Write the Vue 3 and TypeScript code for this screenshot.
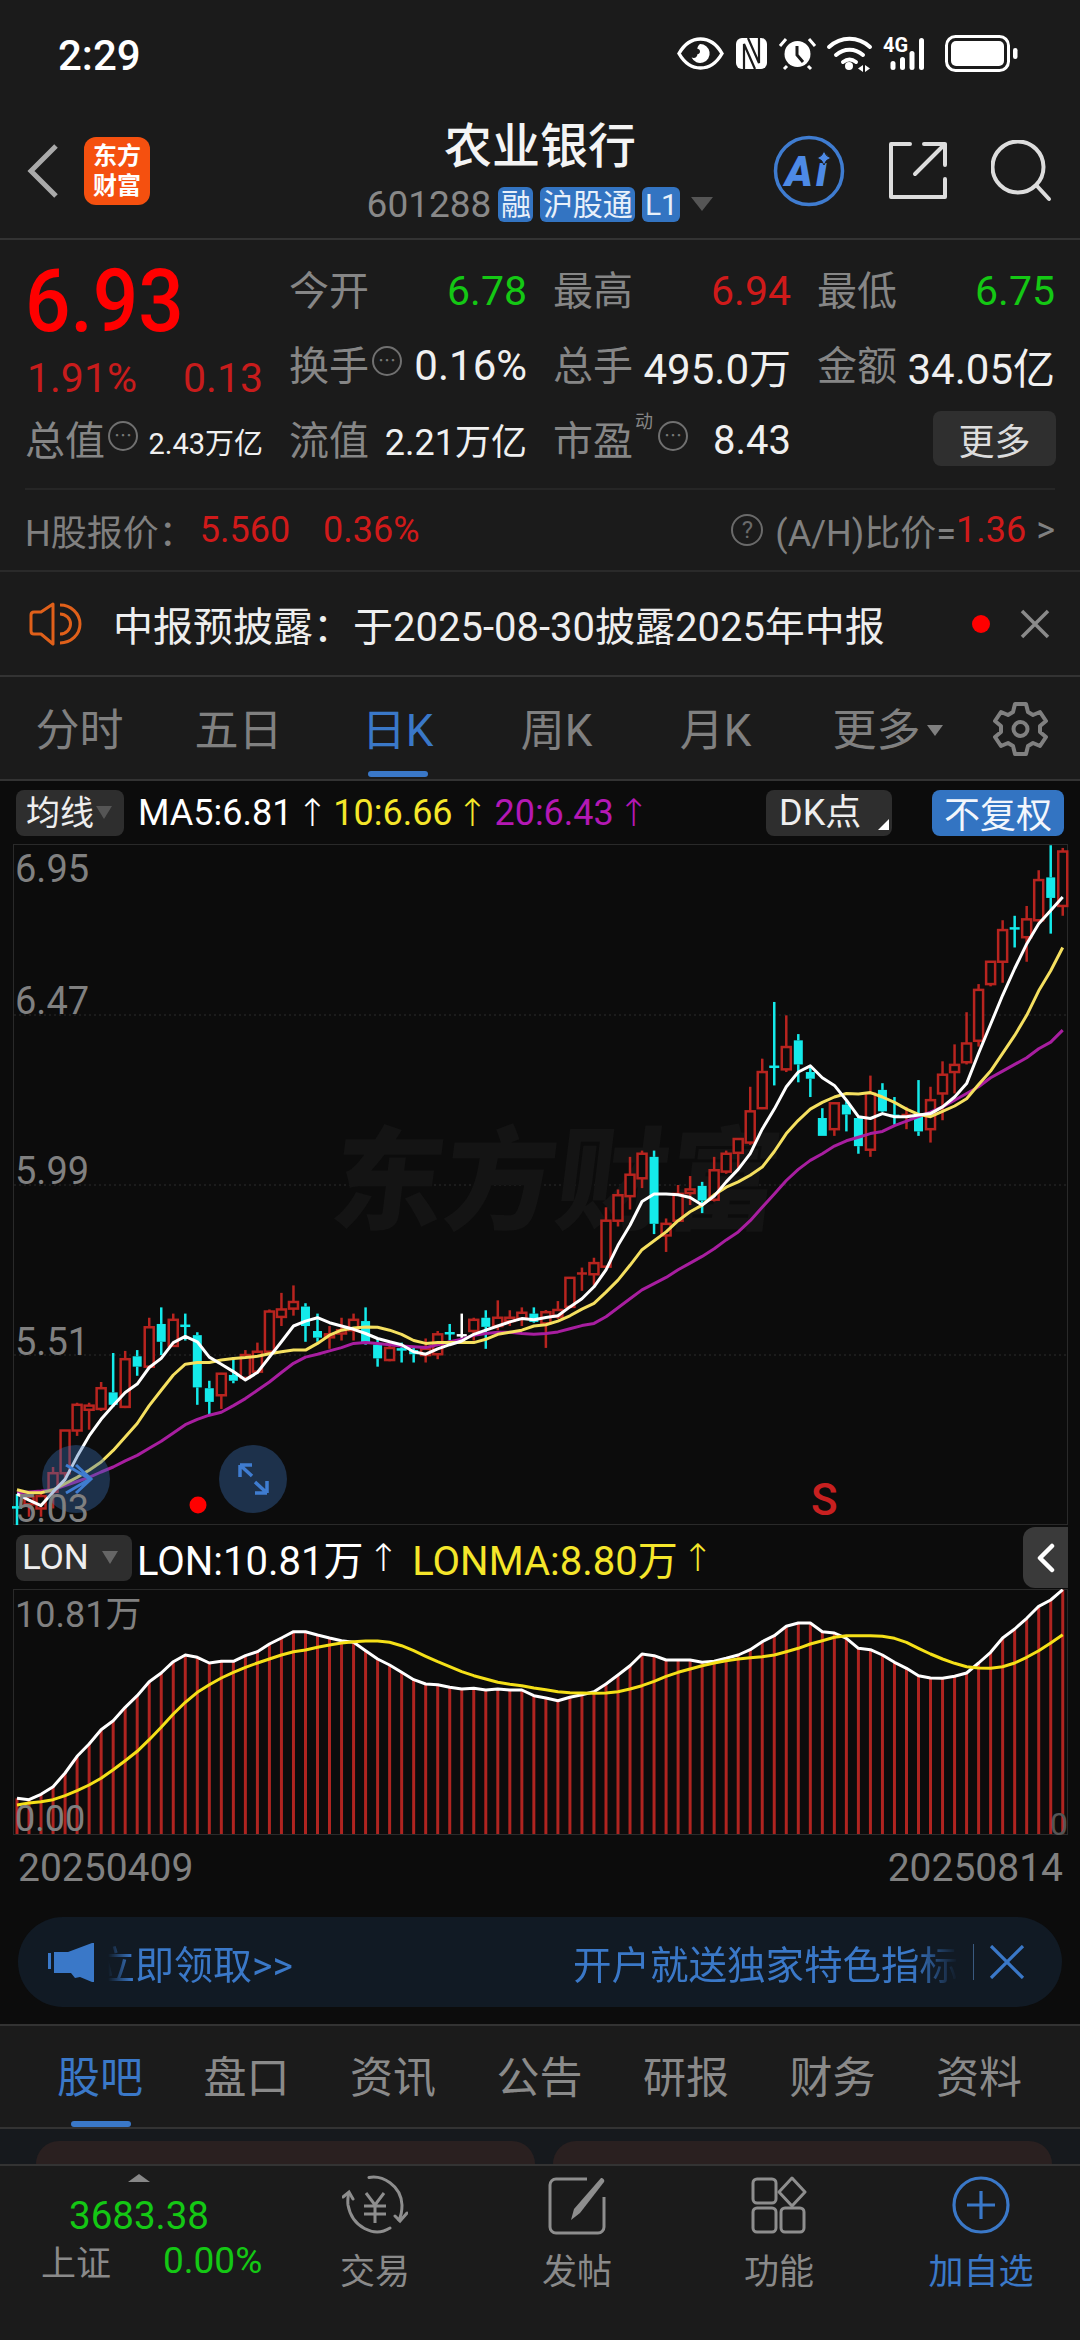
<script setup lang="ts">
import { computed } from 'vue'

// One candle: index on the axis, filled (falling) flag, wick top, body top, body bottom, wick bottom.
// The y values are sampled from the price chart in two strips with different scales.
type Raw = [number, number, number, number, number]

const kx = (i: number) => 17 + 12.02 * i
const leftY = (y: number) => 900 + y / 2.412
const rightY = (y: number) => 840 + y / 2.24

const leftCandles: Raw[] = [
  [2, 1435, 1465, 1467, 1510], [0, 1440, 1442, 1460, 1490], [0, 1430, 1440, 1470, 1490],
  [0, 1370, 1385, 1430, 1470], [0, 1282, 1282, 1385, 1400], [0, 1215, 1220, 1282, 1295],
  [0, 1215, 1222, 1232, 1280], [0, 1165, 1180, 1230, 1235], [1, 1095, 1190, 1220, 1225],
  [0, 1090, 1110, 1225, 1228], [1, 1088, 1103, 1128, 1150], [0, 1010, 1033, 1128, 1130],
  [1, 985, 1025, 1068, 1100], [0, 1000, 1015, 1078, 1080], [2, 1000, 1027, 1030, 1065],
  [1, 1045, 1052, 1178, 1220], [1, 1162, 1180, 1213, 1245], [0, 1143, 1145, 1197, 1230],
  [1, 1105, 1148, 1162, 1168], [0, 1088, 1100, 1155, 1155], [0, 1070, 1092, 1140, 1145],
  [0, 990, 995, 1092, 1095], [0, 950, 990, 1008, 1030], [0, 932, 972, 988, 1005],
  [1, 975, 983, 1030, 1068], [1, 1000, 1042, 1058, 1068], [0, 1030, 1050, 1055, 1085],
  [0, 1010, 1040, 1048, 1065], [0, 1000, 1015, 1040, 1065], [1, 985, 1018, 1072, 1075],
  [1, 1060, 1075, 1108, 1128], [0, 1065, 1083, 1112, 1115], [2, 1070, 1084, 1087, 1118],
  [1, 1080, 1088, 1098, 1118], [0, 1060, 1085, 1100, 1118], [0, 1042, 1050, 1098, 1110],
  [2, 1025, 1045, 1048, 1065], [3, 1000, 1050, 1053, 1060], [0, 1010, 1015, 1042, 1065],
  [1, 992, 1010, 1032, 1085], [0, 968, 1010, 1030, 1040], [0, 992, 1010, 1018, 1030],
  [0, 985, 998, 1012, 1030], [1, 985, 1000, 1020, 1022],
]
const rightCandles: Raw[] = [
  [0, 1055, 1060, 1085, 1140], [0, 1035, 1055, 1070, 1075], [0, 983, 983, 1048, 1048],
  [4, 960, 971, 974, 1012], [0, 938, 950, 975, 1000], [0, 825, 855, 958, 960],
  [0, 785, 798, 855, 868], [0, 712, 752, 800, 830], [0, 698, 705, 760, 782],
  [1, 698, 712, 862, 885], [0, 850, 862, 888, 925], [0, 775, 795, 855, 858],
  [0, 755, 785, 793, 820], [1, 768, 777, 810, 838], [0, 712, 742, 808, 812],
  [0, 698, 705, 745, 750], [0, 672, 672, 703, 740], [0, 555, 610, 680, 685],
  [0, 492, 522, 603, 605], [2, 365, 508, 512, 552], [0, 395, 466, 516, 522],
  [1, 437, 451, 505, 545], [1, 510, 522, 537, 578], [1, 603, 625, 665, 665],
  [0, 590, 592, 650, 665], [1, 585, 595, 617, 655], [1, 620, 625, 688, 705],
  [0, 530, 570, 696, 712], [1, 547, 562, 610, 612], [2, 578, 618, 622, 640],
  [4, 600, 616, 620, 650], [1, 540, 615, 655, 665], [0, 555, 585, 650, 680],
  [0, 498, 528, 570, 630], [0, 460, 506, 522, 570], [0, 388, 458, 500, 505],
  [0, 325, 338, 452, 465], [0, 275, 275, 325, 330], [0, 182, 204, 275, 322],
  [2, 172, 198, 202, 243], [0, 150, 180, 220, 275], [0, 70, 92, 182, 185],
  [1, 14, 86, 132, 212], [0, 20, 28, 150, 172],
]

// 0 = hollow red, 1 = filled cyan, 2 = thin cyan, 3 = thin white, 4 = thin red
const candles = computed(() => {
  const rows = [
    ...leftCandles.map((r) => r.map((v, n) => (n === 0 ? v : leftY(v)))),
    ...rightCandles.map((r) => r.map((v, n) => (n === 0 ? v : rightY(v)))),
  ]
  return rows.map((r, i) => {
    const kind = r[0]
    const cls = kind === 0 || kind === 4 ? 'red' : kind === 3 ? 'white' : 'cyan'
    return { x: kx(i), kind, cls, wt: r[1], bt: r[2], bb: r[3], wb: r[4] }
  })
})

function maLine(left: number[], right: number[]) {
  const ys = [...left.map(leftY), ...right.map(rightY)]
  return ys.map((y, i) => `${kx(i).toFixed(1)},${y.toFixed(1)}`).join(' ')
}

const ma5 = maLine(
  [1435, 1450, 1463, 1430, 1400, 1345, 1295, 1255, 1222, 1190, 1170, 1130, 1108, 1070, 1055, 1068, 1105, 1122, 1140, 1160, 1142, 1105, 1068, 1030, 1018, 1010, 1022, 1030, 1038, 1048, 1060, 1068, 1075, 1092, 1098, 1085, 1075, 1066, 1050, 1040, 1030, 1020, 1012, 1015],
  [1072, 1068, 1048, 1030, 1003, 965, 910, 865, 812, 795, 795, 797, 803, 820, 800, 768, 740, 705, 650, 605, 555, 522, 508, 535, 552, 585, 622, 626, 615, 622, 622, 618, 615, 600, 578, 548, 480, 415, 350, 290, 235, 190, 160, 130],
)
const ma10 = maLine(
  [1425, 1432, 1432, 1425, 1410, 1395, 1378, 1358, 1330, 1298, 1265, 1222, 1185, 1148, 1122, 1118, 1118, 1112, 1108, 1106, 1103, 1097, 1092, 1088, 1088, 1072, 1052, 1040, 1035, 1032, 1033, 1040, 1050, 1065, 1072, 1070, 1070, 1070, 1070, 1062, 1050, 1045, 1040, 1030],
  [1088, 1080, 1068, 1053, 1040, 1015, 988, 955, 920, 900, 880, 855, 835, 820, 797, 780, 768, 753, 735, 700, 660, 630, 605, 590, 578, 570, 571, 568, 578, 590, 605, 617, 622, 610, 598, 582, 550, 520, 480, 440, 395, 340, 295, 243],
)
const ma20 = maLine(
  [1432, 1430, 1428, 1425, 1415, 1405, 1395, 1382, 1370, 1355, 1342, 1325, 1308, 1288, 1268, 1255, 1245, 1238, 1222, 1205, 1185, 1165, 1142, 1120, 1105, 1098, 1090, 1082, 1072, 1070, 1072, 1075, 1078, 1080, 1082, 1075, 1068, 1062, 1052, 1048, 1045, 1045, 1048, 1050],
  [1108, 1104, 1097, 1090, 1085, 1070, 1050, 1030, 1010, 996, 982, 965, 950, 935, 918, 898, 880, 855, 825, 795, 765, 740, 720, 705, 688, 676, 668, 660, 655, 642, 632, 622, 612, 600, 585, 570, 555, 535, 520, 505, 490, 470, 455, 428],
)

// LON panel, sampled 3x from the reference. Base of the bars is y = 1835.
const lonRaw = [838, 842, 826, 803, 762, 712, 675, 632, 605, 565, 530, 488, 462, 428, 408, 415, 432, 427, 427, 410, 398, 375, 357, 338, 338, 348, 357, 365, 370, 395, 420, 438, 460, 482, 495, 497, 505, 510, 508, 513, 510, 513, 513, 530, 537, 545, 535, 527, 518, 495, 468, 440, 405, 410, 423, 423, 423, 430, 427, 418, 408, 392, 368, 350, 322, 312, 312, 338, 342, 358, 388, 392, 408, 430, 448, 470, 477, 478, 472, 462, 432, 400, 357, 330, 298, 262, 243, 212]
const lonMaRaw = [858, 852, 848, 842, 830, 815, 798, 778, 752, 725, 697, 662, 625, 585, 550, 520, 497, 477, 460, 445, 432, 420, 408, 398, 393, 385, 378, 372, 368, 366, 366, 370, 380, 395, 412, 428, 443, 458, 470, 480, 490, 496, 500, 507, 512, 518, 521, 522, 523, 522, 518, 510, 500, 487, 472, 460, 450, 440, 432, 425, 420, 416, 413, 408, 398, 388, 375, 365, 355, 350, 350, 350, 352, 358, 370, 388, 405, 420, 433, 443, 447, 448, 443, 432, 415, 395, 372, 347]

const lonY = (y: number) => 1520 + y / 3
const lonBars = lonRaw.map((y, i) => ({ x: kx(i), y: lonY(y) }))
const toPoints = (rows: number[]) => rows.map((y, i) => `${kx(i).toFixed(1)},${lonY(y).toFixed(1)}`).join(' ')
const lonLine = toPoints(lonRaw)
const lonMaLine = toPoints(lonMaRaw)

// Axis labels sit on top of the plot; top is the label's centre within its panel, minus half a line.
const priceAxis = [
  { text: '6.95', top: 5 },
  { text: '6.47', top: 137 },
  { text: '5.99', top: 307 },
  { text: '5.51', top: 478 },
  { text: '5.03', top: 645 },
]

const periods = ['分时', '五日', '日K', '周K', '月K']
const infoTabs = ['股吧', '盘口', '资讯', '公告', '研报', '财务', '资料']
</script>

<template>
  <div class="page">
    <div class="status">
      <span class="time">2:29</span>
      <svg class="status-icons" width="360" height="60" viewBox="0 0 360 60" fill="#fff">
        <path d="M9 28.5C15 18 22 14 30.5 14S46 18 52 28.5C46 39 39 43 30.5 43S15 39 9 28.5Z" fill="none" stroke="#fff" stroke-width="3.4" />
        <path d="M30 19a9.5 9.5 0 1 1-8.4 13.6c3.4 1 5.3-.2 6-3.6.9 0 2.4-.7 2.4-2.6 0-1.800-1.300-2.700-2.700-2.700.3-2 1.200-3.500 2.700-4.700Z" />
        <rect x="66" y="13" width="31" height="31" rx="6" />
        <path d="M74 44V19l11 25M89 13v25L78 13" fill="none" stroke="#1b1b1b" stroke-width="2.200" />
        <circle cx="127.500" cy="29" r="13" fill="#fff" />
        <path d="M127 21v9l6 7" fill="none" stroke="#1b1b1b" stroke-width="3" />
        <path d="M110 21l6-7M145 21l-6-7M114 44l3-3M141 44l-3-3" stroke="#fff" stroke-width="3" fill="none" />
        <path d="M159 22c12-11 29-11 41 0M166 30c8-7 19-7 27 0M173 37c4-3 9-3 13 0" fill="none" stroke="#fff" stroke-width="4" stroke-linecap="round" />
        <circle cx="179" cy="41" r="4" />
        <path d="M193 40l-5 3.500 5 3.500ZM195 40l5 3.500-5 3.500Z" />
        <text x="213" y="27" class="g4">4G</text>
        <rect x="220.500" y="36" width="5" height="9" rx="2.500" />
        <rect x="230" y="32" width="5" height="13" rx="2.500" />
        <rect x="239.500" y="26" width="5" height="19" rx="2.500" />
        <rect x="249" y="13" width="5" height="32" rx="2.500" />
        <rect x="276.500" y="11.500" width="62" height="34" rx="9" fill="none" stroke="#fff" stroke-width="3" />
        <rect x="281" y="16" width="53" height="25" rx="5" />
        <rect x="343" y="23" width="4.500" height="11" rx="2.200" />
      </svg>
    </div>

    <header class="head">
      <svg class="back" width="34" height="56" viewBox="0 0 34 56" fill="none">
        <path d="M30 3 5 28l25 25" stroke="#aaa" stroke-width="5" />
      </svg>
      <div class="logo"><span>东方</span><span>财富</span></div>
      <div class="title">
        <div class="name">农业银行</div>
        <div class="code">
          <span class="num">601288</span>
          <span class="tag">融</span>
          <span class="tag">沪股通</span>
          <span class="tag">L1</span>
          <i class="tri"></i>
        </div>
      </div>
      <svg class="ai" width="72" height="72" viewBox="0 0 72 72">
        <circle cx="36" cy="36" r="33.500" fill="none" stroke="#3f7cd0" stroke-width="3.500" />
        <text x="12" y="51" class="ai-text">A</text>
        <text x="43" y="51" class="ai-text">i</text>
        <path d="M51 16l2.500 4.500L58 23l-4.500 2.500L51 30l-2.500-4.500L44 23l4.500-2.500Z" fill="#4d8ae6" stroke="#1b1b1b" stroke-width="1" />
      </svg>
      <svg class="share" width="60" height="60" viewBox="0 0 60 60" fill="none" stroke="#ddd" stroke-width="4" stroke-linecap="round" stroke-linejoin="round">
        <path d="M22 3H3v53h54V38" />
        <path d="M27 33 57 3M36 3h21v21" />
      </svg>
      <svg class="search" width="62" height="62" viewBox="0 0 62 62" fill="none" stroke="#ddd" stroke-width="4" stroke-linecap="round">
        <circle cx="27" cy="27" r="25.500" />
        <path d="M46 46 58 59" />
      </svg>
    </header>

    <section class="quote">
      <div class="price-cell">
        <div class="price">6.93</div>
        <div class="change"><span>1.91%</span><span>0.13</span></div>
      </div>
      <div class="stat"><span class="lb">今开</span><span class="green">6.78</span></div>
      <div class="stat"><span class="lb">最高</span><span class="red">6.94</span></div>
      <div class="stat"><span class="lb">最低</span><span class="green">6.75</span></div>
      <div class="stat"><span class="lb">换手<i class="dots">⋯</i></span><span class="val">0.16%</span></div>
      <div class="stat"><span class="lb">总手</span><span class="val">495.0万</span></div>
      <div class="stat"><span class="lb">金额</span><span class="val">34.05亿</span></div>
      <div class="stat"><span class="lb">总值<i class="dots">⋯</i></span><span class="val tiny">2.43万亿</span></div>
      <div class="stat"><span class="lb">流值</span><span class="val small">2.21万亿</span></div>
      <div class="stat">
        <span class="lb">市盈<sup class="dong">动</sup><i class="dots">⋯</i></span><span class="val pe">8.43</span>
      </div>
      <div class="stat end"><button class="more">更多</button></div>
    </section>

    <div class="hk">
      <span class="hk-lb">H股报价：</span>
      <span class="red hk-price">5.560</span>
      <span class="red hk-pct">0.36%</span>
      <span class="grow"></span>
      <i class="qm">?</i>
      <span class="hk-lb">(A/H)比价=</span><span class="red">1.36</span>
      <span class="hk-lb gt">&gt;</span>
    </div>

    <div class="notice">
      <svg width="56" height="50" viewBox="18 10 56 50" fill="none" stroke="#e0601a" stroke-width="3">
        <path d="M43 15 31 23h-7q-3 0-3 3v16q0 3 3 3h7l12 10Z" stroke-linejoin="round" />
        <path d="M50 25a10.500 10 0 0 1 0 20M50 16a20 19 0 0 1 0 38" />
      </svg>
      <span class="notice-text">中报预披露：于2025-08-30披露2025年中报</span>
      <span class="grow"></span>
      <i class="dot"></i>
      <svg width="30" height="30" viewBox="0 0 30 30" stroke="#8a8a8a" stroke-width="3.500"><path d="M2 2l26 26M28 2 2 28" /></svg>
    </div>

    <nav class="periods">
      <span
        v-for="(p, i) in periods"
        :key="p"
        class="period"
        :class="{ on: i === 2 }"
      >{{ p }}</span>
      <span class="period more-p">更多<i class="tri small-tri"></i></span>
      <svg class="gear" width="80" height="70" viewBox="0 0 80 70" fill="none" stroke="#808080" stroke-width="4" stroke-linejoin="round">
        <path d="M33 11h11l2 8 5 3 7-3 6 9-6 5v6l6 5-6 9-7-3-5 3-2 8H33l-2-8-5-3-7 3-6-9 6-5v-6l-6-5 6-9 7 3 5-3Z" />
        <circle cx="38.500" cy="36" r="7" />
      </svg>
    </nav>

    <main class="charts">
      <div class="bar">
        <span class="chip ma-chip">均线<i class="tri chip-tri"></i></span>
        <span class="ma white-t">MA5:6.81<i class="up">↑</i></span>
        <span class="ma yellow-t">10:6.66<i class="up">↑</i></span>
        <span class="ma magenta-t">20:6.43<i class="up">↑</i></span>
        <span class="grow"></span>
        <span class="chip dk">DK点<i class="corner"></i></span>
        <span class="fq">不复权</span>
      </div>

      <div class="kline">
        <svg class="plot" width="1080" height="682" viewBox="0 845 1080 682">
          <rect x="13.500" y="845.500" width="1054" height="680" fill="none" stroke="#2a2a2a" />
          <line v-for="y in [1016, 1186, 1356]" :key="y" x1="14" x2="1067" :y1="y" :y2="y" stroke="#2c2c2c" stroke-dasharray="2 3" />
          <text transform="translate(328 1222) skewX(-7)" class="mark">东方财富</text>
          <g v-for="c in candles" :key="c.x" :class="c.cls">
            <line :x1="c.x" :x2="c.x" :y1="c.wt" :y2="c.kind === 0 || c.kind === 1 ? c.bt : c.wb" class="wick" />
            <template v-if="c.kind === 0">
              <line :x1="c.x" :x2="c.x" :y1="c.bb" :y2="c.wb" class="wick" />
              <rect :x="c.x - 4.500" :y="c.bt" width="9" :height="Math.max(c.bb - c.bt, 3)" class="hollow" />
            </template>
            <template v-else-if="c.kind === 1">
              <line :x1="c.x" :x2="c.x" :y1="c.bb" :y2="c.wb" class="wick" />
              <rect :x="c.x - 4.500" :y="c.bt" width="9" :height="c.bb - c.bt" class="solid" />
            </template>
            <line v-else :x1="c.x - 5" :x2="c.x + 5" :y1="c.bt + 1" :y2="c.bt + 1" class="wick" />
          </g>
          <polyline :points="ma20" class="ln" stroke="#a81ea0" />
          <polyline :points="ma10" class="ln" stroke="#f5e060" />
          <polyline :points="ma5" class="ln" stroke="#fff" />
          <circle cx="76" cy="1480" r="34" fill="#3a6fb4" opacity=".38" />
          <circle cx="253" cy="1480" r="34" fill="#3a6fb4" opacity=".38" />
          <path d="M66 1466l24 14-24 14M76 1466l15 14-15 14" fill="none" stroke="#3f7cd0" stroke-width="3" />
          <path d="M240 1466v12M240 1466h12M240 1466l12 11M267 1494v-12M267 1494h-12M267 1494l-12-11" fill="none" stroke="#3f7cd0" stroke-width="3.500" />
          <circle cx="198" cy="1506" r="8.500" fill="#f00" />
          <text x="811" y="1516" class="s-mark">S</text>
        </svg>
        <span
          v-for="a in priceAxis"
          :key="a.text"
          class="axis-label"
          :style="{ top: a.top + 'px' }"
        >{{ a.text }}</span>
      </div>

      <div class="bar lon-bar">
        <span class="chip lon-chip">LON<i class="tri chip-tri"></i></span>
        <span class="ma lon-text white-t">LON:10.81万<i class="up">↑</i></span>
        <span class="ma lon-text yellow-t lonma">LONMA:8.80万<i class="up">↑</i></span>
        <span class="grow"></span>
        <span class="side">
          <svg width="18" height="30" viewBox="0 0 18 30" fill="none" stroke="#fff" stroke-width="4.500" stroke-linecap="round" stroke-linejoin="round"><path d="M15 3 3 15l12 12" /></svg>
        </span>
      </div>

      <div class="lon">
        <svg class="plot" width="1080" height="246" viewBox="0 1590 1080 246">
          <rect x="13.500" y="1590.500" width="1054" height="245" fill="none" stroke="#2a2a2a" />
          <line v-for="b in lonBars" :key="b.x" :x1="b.x" :x2="b.x" :y1="b.y" y2="1835" stroke="#b02420" stroke-width="3" />
          <polyline :points="lonLine" class="ln" stroke="#fff" />
          <polyline :points="lonMaLine" class="ln" stroke="#f5e018" />
        </svg>
        <span class="axis-label lon-top">10.81万</span>
        <span class="axis-label lon-zero">0.00</span>
        <span class="axis-label lon-end">0</span>
      </div>

      <div class="dates"><span>20250409</span><span>20250814</span></div>

      <div class="banner">
        <svg width="48" height="42" viewBox="0 0 48 42" fill="#3a78c8">
          <rect x="0" y="12" width="3" height="16" />
          <path d="M6 11h14L44 2h2v39h-2l-12-5-5 1-4-5H6Z" />
        </svg>
        <span class="ban-left"><span>立即领取&gt;&gt;</span></span>
        <span class="grow"></span>
        <span class="ban-right">开户就送独家特色指标</span>
        <i class="ban-sep"></i>
        <svg width="36" height="34" viewBox="0 0 36 34" stroke="#3a78c8" stroke-width="3.200"><path d="M2 1l32 32M34 1 2 33" /></svg>
      </div>
    </main>

    <nav class="info-tabs">
      <span v-for="(t, i) in infoTabs" :key="t" class="info-tab" :class="{ on: i === 0 }">{{ t }}</span>
    </nav>

    <div class="peek">
      <div class="peek-card"></div>
      <div class="peek-card"></div>
    </div>

    <footer class="nav">
      <div class="index">
        <i class="index-up"></i>
        <div class="index-val">3683.38</div>
        <div class="index-row"><span class="index-name">上证</span><span class="index-pct">0.00%</span></div>
      </div>
      <div class="nav-item">
        <svg width="66" height="60" viewBox="0 0 66 60" fill="none" stroke="#8e8e8e" stroke-width="3" stroke-linecap="round">
          <path d="M27 2.500C40 0 59 10 60 30c0 6-1 11-3 15M48 53C32 63 10 52 6 30c-.5-4 0-8 .5-11" />
          <path d="M1 22l6-5 4 7M65 38l-7 8-5-5" />
          <path d="M24 18l9 12 9-12M33 30v18M22 31h22M22 39h22" stroke-linecap="butt" />
        </svg>
        <span>交易</span>
      </div>
      <div class="nav-item">
        <svg width="60" height="60" viewBox="0 -1 60 60" fill="none" stroke="#8e8e8e" stroke-width="3">
          <path d="M40 3H9a6 6 0 0 0-6 6v42a6 6 0 0 0 6 6h42a6 6 0 0 0 6-6V21" />
          <path d="M54 2c2 0 4 2 3 4L33 37l-9 7 3-11Z" fill="#8e8e8e" stroke="none" />
        </svg>
        <span>发帖</span>
      </div>
      <div class="nav-item">
        <svg width="56" height="60" viewBox="0 -2 56 60" fill="none" stroke="#8e8e8e" stroke-width="3">
          <rect x="2" y="2" width="23" height="24" rx="4" />
          <path d="M41 1l13 14-13 14-13-14Z" stroke-linejoin="round" />
          <rect x="2" y="31" width="23" height="24" rx="4" />
          <rect x="30" y="31" width="23" height="24" rx="4" />
        </svg>
        <span>功能</span>
      </div>
      <div class="nav-item blue">
        <svg width="58" height="60" viewBox="0 -1 58 60" fill="none" stroke="#3a78c8" stroke-width="3.200">
          <circle cx="29" cy="29" r="27" />
          <path d="M29 15v28M15 29h28" />
        </svg>
        <span>加自选</span>
      </div>
    </footer>
  </div>
</template>

<style scoped>
.page {
  width: 1080px;
  height: 2340px;
  overflow: hidden;
  display: flex;
  flex-direction: column;
  background: #1b1b1b;
  font-family: Roboto, "Noto Sans CJK SC", sans-serif;
  color: #8a8a8a;
}
i {
  font-style: normal;
}
.grow {
  flex: 1;
}
.red {
  color: #d01a1a;
}
.green {
  color: #14c814;
}

.status {
  height: 110px;
  padding: 0 50px 0 58px;
  display: flex;
  align-items: center;
  justify-content: space-between;
  box-sizing: border-box;
}
.time {
  color: #fff;
  font-size: 42px;
  font-weight: 500;
}
.g4 {
  font: 700 20px Roboto, sans-serif;
}

.head {
  position: relative;
  height: 130px;
  display: flex;
  align-items: center;
  border-bottom: 2px solid #333;
  box-sizing: border-box;
  padding-left: 26px;
}
.back {
  margin-top: -6px;
}
.logo {
  width: 66px;
  height: 68px;
  margin: -6px 0 0 24px;
  background: #f5500f;
  border-radius: 12px;
  color: #fff;
  font-size: 24px;
  font-weight: 700;
  line-height: 30px;
  display: flex;
  flex-direction: column;
  align-items: center;
  justify-content: center;
}
.title {
  width: 400px;
  margin-left: 190px;
  display: flex;
  flex-direction: column;
  align-items: center;
}
.name {
  color: #f4f4f4;
  font-size: 48px;
  font-weight: 500;
  line-height: 64px;
  margin-top: -10px;
}
.code {
  display: flex;
  align-items: center;
  gap: 7px;
  height: 38px;
  margin-top: 6px;
}
.num {
  font-size: 37px;
  color: #888;
}
.tag {
  background: #3374c2;
  color: #e8f0fa;
  font-size: 30px;
  line-height: 35px;
  height: 35px;
  padding: 0 2.500px;
  border-radius: 6px;
}
.tri {
  display: inline-block;
  width: 0;
  height: 0;
  border-left: 11px solid transparent;
  border-right: 11px solid transparent;
  border-top: 14px solid #555;
  margin-left: 4px;
}
.ai {
  margin: -6px 0 0 33px;
}
.ai-text {
  font: italic 900 42px Roboto, sans-serif;
  fill: #4d8ae6;
}
.share {
  margin: -6px 0 0 43px;
}
.search {
  margin: -6px 0 0 43px;
}

.quote {
  height: 250px;
  margin: 0 25px;
  border-bottom: 2px solid #262626;
  padding-top: 13px;
  box-sizing: border-box;
  display: grid;
  grid-template-columns: repeat(4, 238px);
  grid-auto-rows: 75px;
  column-gap: 26px;
}
.price-cell {
  grid-row: 1 / 3;
  grid-column: 1;
}
.price {
  color: #f00;
  font-size: 88px;
  font-weight: 500;
  line-height: 92px;
  margin: 2px 0 0 0;
  transform: scaleX(0.91);
  transform-origin: left;
}
.change {
  display: flex;
  justify-content: space-between;
  color: #c81c1c;
  font-size: 41px;
  line-height: 46px;
  margin-top: 8px;
}
.change span:first-child {
  margin-left: 2px;
}
.stat {
  display: flex;
  align-items: center;
  justify-content: space-between;
  font-size: 41px;
}
.stat.end {
  justify-content: flex-end;
}
.lb {
  font-size: 40px;
  color: #868686;
  display: flex;
  align-items: center;
  position: relative;
  margin-top: -5px;
}
.val {
  color: #f0f0f0;
  font-size: 42px;
}
.val.tiny {
  font-size: 29px;
}
.val.small {
  font-size: 36px;
  margin-top: -3px;
}
.val.pe {
  font-size: 40px;
}
.dots {
  width: 30px;
  height: 30px;
  box-sizing: border-box;
  margin-left: 3px;
  margin-top: -4px;
  border: 2px solid #707070;
  border-radius: 50%;
  font-size: 18px;
  line-height: 26px;
  text-align: center;
  color: #777;
}
.dong {
  position: absolute;
  left: 82px;
  top: 2px;
  font-size: 18px;
  line-height: 22px;
}
.lb:has(.dong) .dots {
  margin-left: 25px;
}
.more {
  width: 123px;
  height: 55px;
  margin-top: -4px;
  margin-right: -1px;
  padding: 0;
  border: 0;
  border-radius: 8px;
  background: #2f2f2f;
  color: #ddd;
  font: 36px "Noto Sans CJK SC", sans-serif;
}

.hk {
  height: 82px;
  padding: 0 25px;
  display: flex;
  align-items: center;
  font-size: 36px;
  border-bottom: 2px solid #2a2a2a;
  box-sizing: border-box;
}
.hk-lb {
  color: #808080;
}
.hk-price {
  margin-left: 5px;
}
.hk-pct {
  margin-left: 33px;
}
.gt {
  margin-left: 10px;
}
.qm {
  width: 32px;
  height: 32px;
  box-sizing: border-box;
  border: 2px solid #6a6a6a;
  border-radius: 50%;
  margin-right: 12px;
  font-size: 24px;
  line-height: 28px;
  text-align: center;
  color: #6a6a6a;
}

.notice {
  height: 105px;
  padding: 0 30px 0 28px;
  display: flex;
  align-items: center;
  border-bottom: 2px solid #333;
  box-sizing: border-box;
}
.notice-text {
  color: #eee;
  font-size: 40px;
  margin-left: 29px;
}
.dot {
  width: 18px;
  height: 18px;
  border-radius: 50%;
  background: #f00;
  margin-right: 30px;
}

.periods {
  height: 104px;
  position: relative;
  display: flex;
  align-items: center;
  border-bottom: 2px solid #333;
  box-sizing: border-box;
  font-size: 44px;
}
.period {
  position: relative;
  width: 159px;
  color: #808080;
  line-height: 60px;
  margin-top: 5px;
  text-align: center;
}
.period.on {
  color: #3a78c8;
}
.period.on::after {
  content: "";
  position: absolute;
  left: 50px;
  bottom: -16px;
  width: 60px;
  height: 6px;
  border-radius: 3px;
  background: #3a78c8;
}
.more-p {
  display: flex;
  align-items: center;
  justify-content: center;
  margin-left: 13px;
}
.small-tri {
  border-left-width: 8px;
  border-right-width: 8px;
  border-top-width: 11px;
  border-top-color: #808080;
  margin-left: 6px;
}
.gear {
  margin-left: 15px;
}

.charts {
  flex: none;
  height: 1243px;
  background: #0c0c0c;
}
.bar {
  height: 63px;
  padding: 0 16px;
  display: flex;
  align-items: center;
  box-sizing: border-box;
}
.chip {
  background: #2e2e2e;
  color: #eee;
  border-radius: 8px;
  height: 46px;
  font-size: 34px;
  line-height: 46px;
  display: flex;
  align-items: center;
  padding-left: 10px;
  box-sizing: border-box;
}
.ma-chip {
  width: 108px;
  margin-right: 14px;
}
.chip-tri {
  border-left-width: 8px;
  border-right-width: 8px;
  border-top-width: 13px;
  margin-left: 2px;
}
.ma {
  font-size: 36px;
  display: inline-flex;
  align-items: center;
}
.lon-text {
  font-size: 40px;
}
.up {
  font-size: 38px;
  margin-left: 4px;
  font-family: "DejaVu Sans", sans-serif;
  font-weight: 200;
}
.white-t {
  color: #fff;
}
.yellow-t {
  color: #f5e62a;
  margin-left: 5px;
}
.magenta-t {
  color: #b418b4;
  margin-left: 6px;
}
.dk {
  width: 126px;
  position: relative;
  margin-right: 40px;
  padding-left: 13px;
  font-size: 36px;
}
.corner {
  position: absolute;
  right: 3px;
  bottom: 6px;
  width: 0;
  height: 0;
  border-left: 11px solid transparent;
  border-bottom: 11px solid #fff;
}
.fq {
  width: 132px;
  height: 46px;
  background: #3374c2;
  border-radius: 8px;
  color: #f2f6fc;
  font: 36px/44px "Noto Sans CJK SC", sans-serif;
  text-align: center;
}
.kline,
.lon {
  position: relative;
  line-height: 0;
}
.plot {
  display: block;
}
.axis-label {
  position: absolute;
  left: 15px;
  font-size: 38px;
  line-height: 40px;
  color: #808080;
  white-space: nowrap;
}
.lon-top {
  top: 6px;
  font-size: 36px;
}
.lon-zero {
  top: 210px;
  font-size: 36px;
}
.lon-end {
  left: 1050px;
  top: 215px;
  font-size: 32px;
  color: #555;
}
.mark {
  font: 900 112px "Noto Sans CJK SC", sans-serif;
  fill: #141414;
}
.s-mark {
  font: 500 44px Roboto, sans-serif;
  fill: #c82020;
}
.wick {
  stroke-width: 2.500px;
}
.red .wick {
  stroke: #b8241f;
}
.cyan .wick {
  stroke: #14eaea;
}
.white .wick {
  stroke: #fff;
}
.hollow {
  fill: #0c0c0c;
  stroke: #b8241f;
  stroke-width: 2.500px;
}
.solid {
  fill: #14eaea;
}
.ln {
  fill: none;
  stroke-width: 3px;
  stroke-linejoin: round;
}
.lon-bar {
  padding-right: 12px;
}
.lon-chip {
  width: 116px;
  margin-right: 5px;
  padding-left: 6px;
  font-size: 35px;
}
.lon-chip .chip-tri {
  margin-left: 13px;
  border-top-color: #666;
}
.lonma {
  margin-left: 13px;
}
.side {
  width: 45px;
  height: 61px;
  background: #3a3a3a;
  border-radius: 12px 0 0 12px;
  display: flex;
  align-items: center;
  justify-content: center;
}
.dates {
  height: 66px;
  padding: 0 17px 0 18px;
  display: flex;
  align-items: center;
  justify-content: space-between;
  font-size: 39px;
  color: #808080;
}
.banner {
  margin: 16px 18px 0;
  height: 90px;
  border-radius: 45px;
  background: #111a24;
  color: #3a78c8;
  font-size: 39px;
  display: flex;
  align-items: center;
  padding: 0 37px 0 30px;
  box-sizing: border-box;
}
.ban-left {
  width: 205px;
  margin-left: 12px;
  overflow: hidden;
  white-space: nowrap;
  -webkit-mask-image: linear-gradient(90deg, transparent, #000 24px);
  mask-image: linear-gradient(90deg, transparent, #000 24px);
}
.ban-left span {
  margin-left: -12px;
}
.ban-right {
  width: 385px;
  overflow: hidden;
  white-space: nowrap;
  font-size: 38.500px;
  -webkit-mask-image: linear-gradient(90deg, #000 340px, transparent);
  mask-image: linear-gradient(90deg, #000 340px, transparent);
}
.ban-sep {
  width: 1px;
  height: 36px;
  background: #3a5a80;
  margin: 0 15px 0 15px;
}

.info-tabs {
  height: 105px;
  display: flex;
  align-items: center;
  justify-content: space-between;
  padding: 0 58px 0 57px;
  border-top: 2px solid #333;
  border-bottom: 2px solid #333;
  box-sizing: border-box;
  font-size: 43px;
}
.info-tab {
  position: relative;
  color: #8a8a8a;
  line-height: 60px;
  margin-top: 3px;
}
.info-tab.on {
  color: #3a78c8;
}
.info-tab.on::after {
  content: "";
  position: absolute;
  left: 14px;
  bottom: -19px;
  width: 60px;
  height: 6px;
  border-radius: 3px;
  background: #3a78c8;
}
.peek {
  height: 35px;
  padding: 12px 28px 0 36px;
  box-sizing: border-box;
  display: flex;
  gap: 18px;
  background: #16191d;
}
.peek-card {
  flex: 1;
  border-radius: 24px 24px 0 0;
  background: #2a2020;
}
.nav {
  flex: 1;
  border-top: 2px solid #333;
  display: grid;
  grid-template-columns: 274px repeat(4, 202px);
  position: relative;
}
.index {
  padding-top: 8px;
  position: relative;
}
.index-up {
  position: absolute;
  left: 128px;
  top: 8px;
  width: 0;
  height: 0;
  border-left: 11px solid transparent;
  border-right: 11px solid transparent;
  border-bottom: 8px solid #888;
}
.index-val {
  color: #14c814;
  font-size: 38.500px;
  line-height: 44px;
  margin: 20px 0 0 69px;
}
.index-row {
  display: flex;
  align-items: center;
  margin: -3px 0 0 41px;
}
.index-name {
  font-size: 35px;
  color: #8a8a8a;
}
.index-pct {
  color: #14c814;
  font-size: 37px;
  margin-left: 52px;
}
.nav-item {
  display: flex;
  flex-direction: column;
  align-items: center;
  padding-top: 9px;
  font-size: 35px;
  color: #8a8a8a;
  gap: 8px;
}
.nav-item.blue {
  color: #3a78c8;
}
</style>

<style>
html,
body {
  margin: 0;
  background: #1b1b1b;
}
</style>
